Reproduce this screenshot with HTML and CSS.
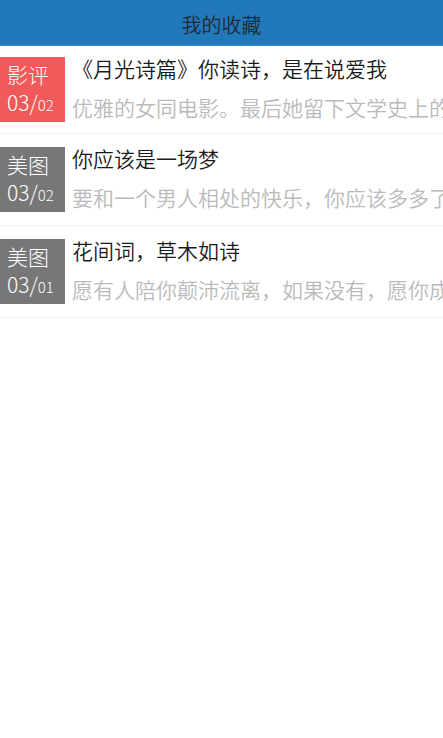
FILE: index.html
```html
<!DOCTYPE html>
<html lang="zh-CN">
<head>
  <meta charset="UTF-8" />
  <meta name="viewport" content="width=device-width, initial-scale=1.0"/>
  <title>我的收藏</title>
  <link rel="stylesheet" href="styles.css">
</head>
<body>
  <div class="header">我的收藏</div>

  <ul class="fav-list">
    <li class="item">
      <div class="badge red">
        <div class="tag">影评</div>
        <div class="date">03/<span class="month">02</span></div>
      </div>
      <div class="info">
        <div class="title">《月光诗篇》你读诗，是在说爱我</div>
        <div class="desc">优雅的女同电影。最后她留下文学史上的传奇</div>
      </div>
    </li>
    <li class="item">
      <div class="badge gray">
        <div class="tag">美图</div>
        <div class="date">03/<span class="month">02</span></div>
      </div>
      <div class="info">
        <div class="title">你应该是一场梦</div>
        <div class="desc">要和一个男人相处的快乐，你应该多多了解他</div>
      </div>
    </li>
    <li class="item">
      <div class="badge gray">
        <div class="tag">美图</div>
        <div class="date">03/<span class="month">01</span></div>
      </div>
      <div class="info">
        <div class="title">花间词，草木如诗</div>
        <div class="desc">愿有人陪你颠沛流离，如果没有，愿你成为自己的太阳</div>
      </div>
    </li>
  </ul>
</body>
</html>
```

FILE: styles.css
```css
body {
  margin: 0;
  background: #fff;
  font-family: "Noto Sans CJK SC", sans-serif;
}
.header {
  height: 45px;
  line-height: 50px;
  background: #2179bc;
  border-bottom: 1px solid #3f8dca;
  color: #222a30;
  font-size: 20px;
  font-weight: 350;
  text-align: center;
}
.fav-list {
  list-style: none;
  margin: 0;
  padding: 0;
}
.item {
  display: flex;
  padding: 13px 0;
  border-bottom: 1px solid #efefef;
}
.item:first-child {
  padding: 11px 0;
}
.badge {
  width: 65px;
  height: 65px;
  flex-shrink: 0;
  box-sizing: border-box;
  padding: 4px 0 0 7px;
  color: #fff;
  font-weight: 300;
}
.red {
  background: #f05a5a;
}
.gray {
  background: #777;
}
.tag {
  font-size: 21px;
  line-height: 27px;
}
.date {
  font-size: 21px;
  line-height: 24px;
  margin-top: 2px;
}
.month {
  font-size: 15px;
}
.info {
  flex: 1;
  min-width: 0;
  margin-left: 7px;
  margin-top: -3px;
  white-space: nowrap;
  overflow: hidden;
  font-family: "Noto Sans CJK TC", sans-serif;
  font-weight: 350;
}
.title {
  font-size: 21px;
  line-height: 28px;
  color: #1a1a1a;
}
.desc {
  font-size: 21px;
  line-height: 30px;
  margin-top: 10px;
  color: #bababa;
}
```
